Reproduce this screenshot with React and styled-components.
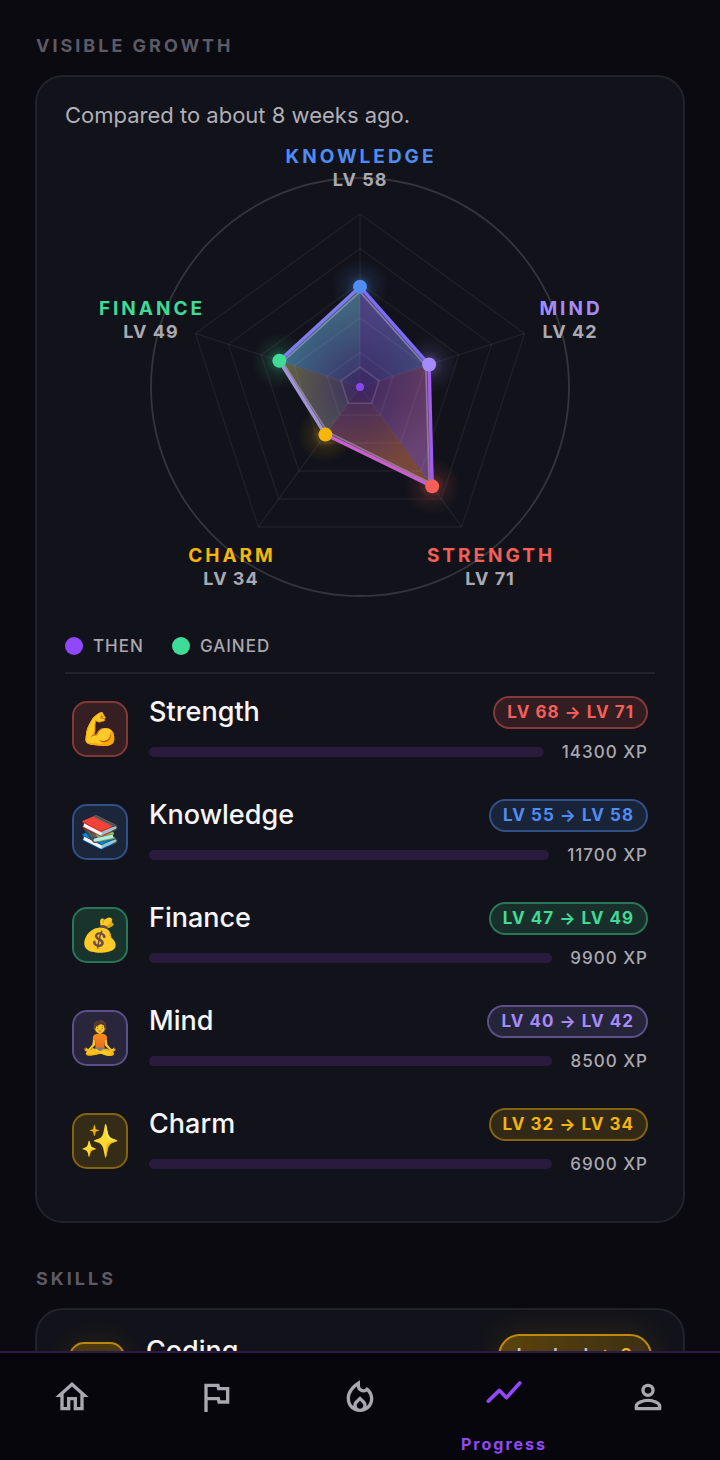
import React from 'react';
import styled, { createGlobalStyle } from 'styled-components';
import { MdOutlineHome, MdOutlineFlag, MdOutlineLocalFireDepartment } from 'react-icons/md';

const GlobalStyle = createGlobalStyle`
  * { box-sizing: border-box; }
  html, body { margin: 0; background: #0b0a10; }
  body { font-family: Inter, "Liberation Sans", sans-serif; color: #f7f6fb; -webkit-font-smoothing: antialiased; }
  h2, h3, p, ul { margin: 0; padding: 0; font-weight: inherit; }
`;

const COLORS = {
  knowledge: '#4f8df5',
  mind: '#a58bfa',
  strength: '#f55f57',
  charm: '#f5b50a',
  finance: '#3fdc97',
};

const Shell = styled.div`
  display: flex;
  flex-direction: column;
  height: 100vh;
`;

const Page = styled.main`
  flex: 1;
  min-height: 0;
  overflow: hidden auto;
  scrollbar-width: none;
  padding: 34px 35px 40px;
`;

const SectionTitle = styled.h2`
  padding-left: 1px;
  font-size: 18px;
  line-height: 24px;
  font-weight: 700;
  letter-spacing: 3px;
  color: #5c5b65;
`;

const Card = styled.section`
  margin: 17px 0 44px;
  padding: 24px 28px;
  border: 2px solid #222329;
  border-radius: 28px;
  background: #12131a;
`;

const Intro = styled.p`
  font-size: 22px;
  line-height: 28px;
  color: #b0afb7;
`;

const Chart = styled.svg`
  display: block;
  width: 100%;
  height: 474px;
  margin: 14px 0 9px;
`;

const AxisName = styled.text`
  font-size: 19px;
  font-weight: 700;
  letter-spacing: 3px;
  text-anchor: middle;
  fill: ${(p) => p.$color};
`;

const AxisLevel = styled(AxisName)`
  font-size: 18px;
  letter-spacing: 1px;
`;

const Legend = styled.ul`
  display: flex;
  gap: 28px;
  padding: 8px 0 14px;
  border-bottom: 2px solid #222329;
  list-style: none;
`;

const LegendItem = styled.li`
  display: flex;
  align-items: center;
  gap: 10px;
  font-size: 17px;
  line-height: 24px;
  font-weight: 500;
  letter-spacing: 1px;
  color: #a9a8b0;

  &::before {
    content: '';
    width: 18px;
    height: 18px;
    border-radius: 50%;
    background: ${(p) => p.$color};
  }
`;

const StatList = styled.ul`
  display: flex;
  flex-direction: column;
  gap: 35px;
  padding: 21px 7px 22px;
  list-style: none;
`;

const StatRow = styled.li`
  display: flex;
  gap: 21px;
  height: 68px;
`;

const Tile = styled.span`
  flex: none;
  display: grid;
  place-items: center;
  width: 56px;
  height: 56px;
  margin-top: 6px;
  border: 2px solid ${(p) => p.$color}80;
  border-radius: 15px;
  background: ${(p) => p.$color}28;
  background-clip: padding-box;
  font-size: 32px;
  line-height: 40px;
`;

const StatBody = styled.div`
  flex: 1;
  min-width: 0;
`;

const StatLine = styled.div`
  display: flex;
  align-items: center;
  justify-content: space-between;
  gap: 18px;
`;

const StatName = styled.h3`
  font-size: 27px;
  line-height: 34px;
  font-weight: 500;
`;

const Pill = styled.span`
  padding: 0 12px;
  border: 2px solid ${(p) => p.$color}80;
  border-radius: 20px;
  background: ${(p) => p.$color}24;
  background-clip: padding-box;
  font-size: 17px;
  line-height: 29px;
  font-weight: 700;
  letter-spacing: 1px;
  white-space: nowrap;
  color: ${(p) => p.$color};
`;

const XpLine = styled(StatLine)`
  padding-top: 11px;
`;

const Track = styled.div`
  flex: 1;
  height: 10px;
  border-radius: 5px;
  background: #281b3e;
`;

const Xp = styled.span`
  font-size: 17px;
  line-height: 24px;
  font-weight: 500;
  letter-spacing: 1px;
  color: #a9a8b0;
`;

const SkillRow = styled.div`
  display: flex;
  gap: 21px;
  padding: 0 3px 24px 4px;
`;

const SkillTile = styled(Tile)`
  margin-top: 8px;
  border-color: #b8860f;
  background: linear-gradient(#4d3a10, #2e2412);
  box-shadow: 0 0 28px ${(p) => p.$color}1c;
`;

const SkillHead = styled.div`
  flex: 1;
  display: flex;
  justify-content: space-between;
  align-items: flex-start;
`;

const SkillPill = styled(Pill)`
  padding: 0 17px;
  border-color: #c08a0c;
  border-radius: 24px;
  background: linear-gradient(90deg, #5a430c, #3d3012);
  font-size: 19px;
  line-height: 40px;
  font-weight: 600;
  box-shadow: 0 0 32px ${(p) => p.$color}22;
`;

const Muted = styled.span`
  color: #c4c0cc;
`;

const Nav = styled.nav`
  flex: none;
  display: flex;
  height: 109px;
  border-top: 2px solid #2b1a44;
  background: #07060c;
`;

const NavButton = styled.button`
  flex: 1 1 0;
  min-width: 0;
  display: flex;
  flex-direction: column;
  align-items: center;
  gap: 22px;
  padding: ${(p) => (p.$active ? '19px 0 0' : '24px 0 0')};
  border: 0;
  background: none;
  font: 700 16px/20px Inter, sans-serif;
  letter-spacing: 2px;
  color: ${(p) => (p.$active ? '#9049f5' : '#a9a8b0')};

  svg { width: 40px; height: 40px; }
`;

const CX = 295;
const CY = 244;
const R = 173;
const AXES = [
  { id: 'knowledge', then: 55, now: 58, x: 295, y: 20 },
  { id: 'mind', then: 40, now: 42, x: 505, y: 172 },
  { id: 'strength', then: 68, now: 71, x: 425, y: 419 },
  { id: 'charm', then: 32, now: 34, x: 166, y: 419 },
  { id: 'finance', then: 47, now: 49, x: 86, y: 172 },
];
const EDGES = ['#7d6cf8', '#a45cf0', '#c75fd0', '#a294dc', '#7f7cf2'];
const SLICES = [
  ['#4f3f82', '#41507e'],
  ['#653d5e', '#6a457c'],
  ['#7c4a34', '#6a4048'],
  ['#56624f', '#63633f'],
  ['#3c6c88', '#41647c'],
];

const point = (i, r) => {
  const a = ((-90 + i * 72) * Math.PI) / 180;
  return [CX + r * Math.cos(a), CY + r * Math.sin(a)];
};
const ring = (radius) => AXES.map((_, i) => point(i, radius(i)).join(',')).join(' ');

function Radar() {
  const tips = AXES.map((a, i) => point(i, (a.now / 100) * R));
  return (
    <Chart viewBox="0 0 590 474" role="img" aria-label="Attribute levels">
      <defs>
        {AXES.map((a, i) => {
          const end = tips[(i + 1) % 5];
          return (
            <linearGradient key={a.id} id={`slice-${a.id}`} gradientUnits="userSpaceOnUse"
              x1={tips[i][0]} y1={tips[i][1]} x2={end[0]} y2={end[1]}>
              <stop offset="0" stopColor={SLICES[i][0]} />
              <stop offset="1" stopColor={SLICES[i][1]} />
            </linearGradient>
          );
        })}
        {AXES.map((a) => (
          <radialGradient key={a.id} id={`glow-${a.id}`}>
            <stop offset="0" stopColor={COLORS[a.id]} stopOpacity="0.4" />
            <stop offset="0.5" stopColor={COLORS[a.id]} stopOpacity="0.1" />
            <stop offset="1" stopColor={COLORS[a.id]} stopOpacity="0" />
          </radialGradient>
        ))}
        <radialGradient id="core" gradientUnits="userSpaceOnUse" cx={CX} cy={CY} r="80">
          <stop offset="0" stopColor="#3a2562" stopOpacity="0.85" />
          <stop offset="1" stopColor="#3a2562" stopOpacity="0" />
        </radialGradient>
      </defs>
      <circle cx={CX} cy={CY} r="209" fill="none" stroke="#34353a" strokeWidth="1.8" />
      {tips.map(([x, y], i) => (
        <circle key={i} cx={x} cy={y} r="28" fill={`url(#glow-${AXES[i].id})`} />
      ))}
      {tips.map(([x, y], i) => {
        const [nx, ny] = tips[(i + 1) % 5];
        return (
          <polygon key={i} points={`${CX},${CY} ${x},${y} ${nx},${ny}`} fill={`url(#slice-${AXES[i].id})`} />
        );
      })}
      <polygon points={ring((i) => (AXES[i].now / 100) * R)} fill="url(#core)" />
      <g fill="none" stroke="#ffffff" strokeOpacity="0.055" strokeWidth="1.4">
        {[0.2, 0.4, 0.6, 0.8, 1].map((s) => (
          <polygon key={s} points={ring(() => s * R)} />
        ))}
        {AXES.map((a, i) => {
          const [x, y] = point(i, R);
          return <line key={a.id} x1={CX} y1={CY} x2={x} y2={y} />;
        })}
      </g>
      <polygon points={ring(() => 20)} fill="#38205c" fillOpacity="0.3" stroke="#ffffff" strokeOpacity="0.14" strokeWidth="1.6" />
      {tips.map(([x, y], i) => {
        const [nx, ny] = tips[(i + 1) % 5];
        return <line key={i} x1={x} y1={y} x2={nx} y2={ny} stroke={EDGES[i]} strokeWidth="3.4" />;
      })}
      <polygon points={ring((i) => (AXES[i].then / 100) * R)} fill="none" stroke="#b4a8cc" strokeOpacity="0.55" strokeWidth="1.6" />
      {tips.map(([x, y], i) => (
        <circle key={i} cx={x} cy={y} r="7" fill={COLORS[AXES[i].id]} />
      ))}
      <circle cx={CX} cy={CY} r="4" fill="#8a46ee" />
      {AXES.map((a) => (
        <g key={a.id}>
          <AxisName x={a.x + 1} y={a.y} $color={COLORS[a.id]}>{a.id.toUpperCase()}</AxisName>
          <AxisLevel x={a.x} y={a.y + 23} $color="#aaa9b1">{`LV ${a.now}`}</AxisLevel>
        </g>
      ))}
    </Chart>
  );
}

const STATS = [
  { id: 'strength', name: 'Strength', icon: '💪', from: 68, to: 71, xp: 14300 },
  { id: 'knowledge', name: 'Knowledge', icon: '📚', from: 55, to: 58, xp: 11700 },
  { id: 'finance', name: 'Finance', icon: '💰', from: 47, to: 49, xp: 9900 },
  { id: 'mind', name: 'Mind', icon: '🧘', from: 40, to: 42, xp: 8500 },
  { id: 'charm', name: 'Charm', icon: '✨', from: 32, to: 34, xp: 6900 },
];

const TrendIcon = () => (
  <svg viewBox="0 0 24 24" fill="none" stroke="currentColor" strokeWidth="2.2" strokeLinecap="round" strokeLinejoin="round">
    <path d="M2.6 17.5 9.2 11l4.3 4.4L21.5 6.6" />
  </svg>
);

const PersonIcon = () => (
  <svg viewBox="0 0 24 24" fill="none" stroke="currentColor" strokeWidth="2" strokeLinejoin="round">
    <circle cx="12" cy="8" r="3" />
    <path d="M5 19v-1.6c0-2 4-3.4 7-3.4s7 1.4 7 3.4V19z" />
  </svg>
);

export default function App() {
  return (
    <>
      <GlobalStyle />
      <Shell>
        <Page>
          <SectionTitle>VISIBLE GROWTH</SectionTitle>
          <Card>
            <Intro>Compared to about 8 weeks ago.</Intro>
            <Radar />
            <Legend>
              <LegendItem $color="#9048ff">THEN</LegendItem>
              <LegendItem $color={COLORS.finance}>GAINED</LegendItem>
            </Legend>
            <StatList>
              {STATS.map((s) => (
                <StatRow key={s.id}>
                  <Tile $color={COLORS[s.id]}>{s.icon}</Tile>
                  <StatBody>
                    <StatLine>
                      <StatName>{s.name}</StatName>
                      <Pill $color={COLORS[s.id]}>LV {s.from} → LV {s.to}</Pill>
                    </StatLine>
                    <XpLine>
                      <Track />
                      <Xp>{s.xp} XP</Xp>
                    </XpLine>
                  </StatBody>
                </StatRow>
              ))}
            </StatList>
          </Card>
          <SectionTitle>SKILLS</SectionTitle>
          <Card>
            <SkillRow>
              <SkillTile $color={COLORS.charm} />
              <SkillHead>
                <StatName>Coding</StatName>
                <SkillPill $color={COLORS.charm}><Muted>Locked</Muted> → 2</SkillPill>
              </SkillHead>
            </SkillRow>
          </Card>
        </Page>
        <Nav>
          <NavButton aria-label="Home"><MdOutlineHome /></NavButton>
          <NavButton aria-label="Goals"><MdOutlineFlag /></NavButton>
          <NavButton aria-label="Streak"><MdOutlineLocalFireDepartment /></NavButton>
          <NavButton $active aria-current="page"><TrendIcon />Progress</NavButton>
          <NavButton aria-label="Profile"><PersonIcon /></NavButton>
        </Nav>
      </Shell>
    </>
  );
}
